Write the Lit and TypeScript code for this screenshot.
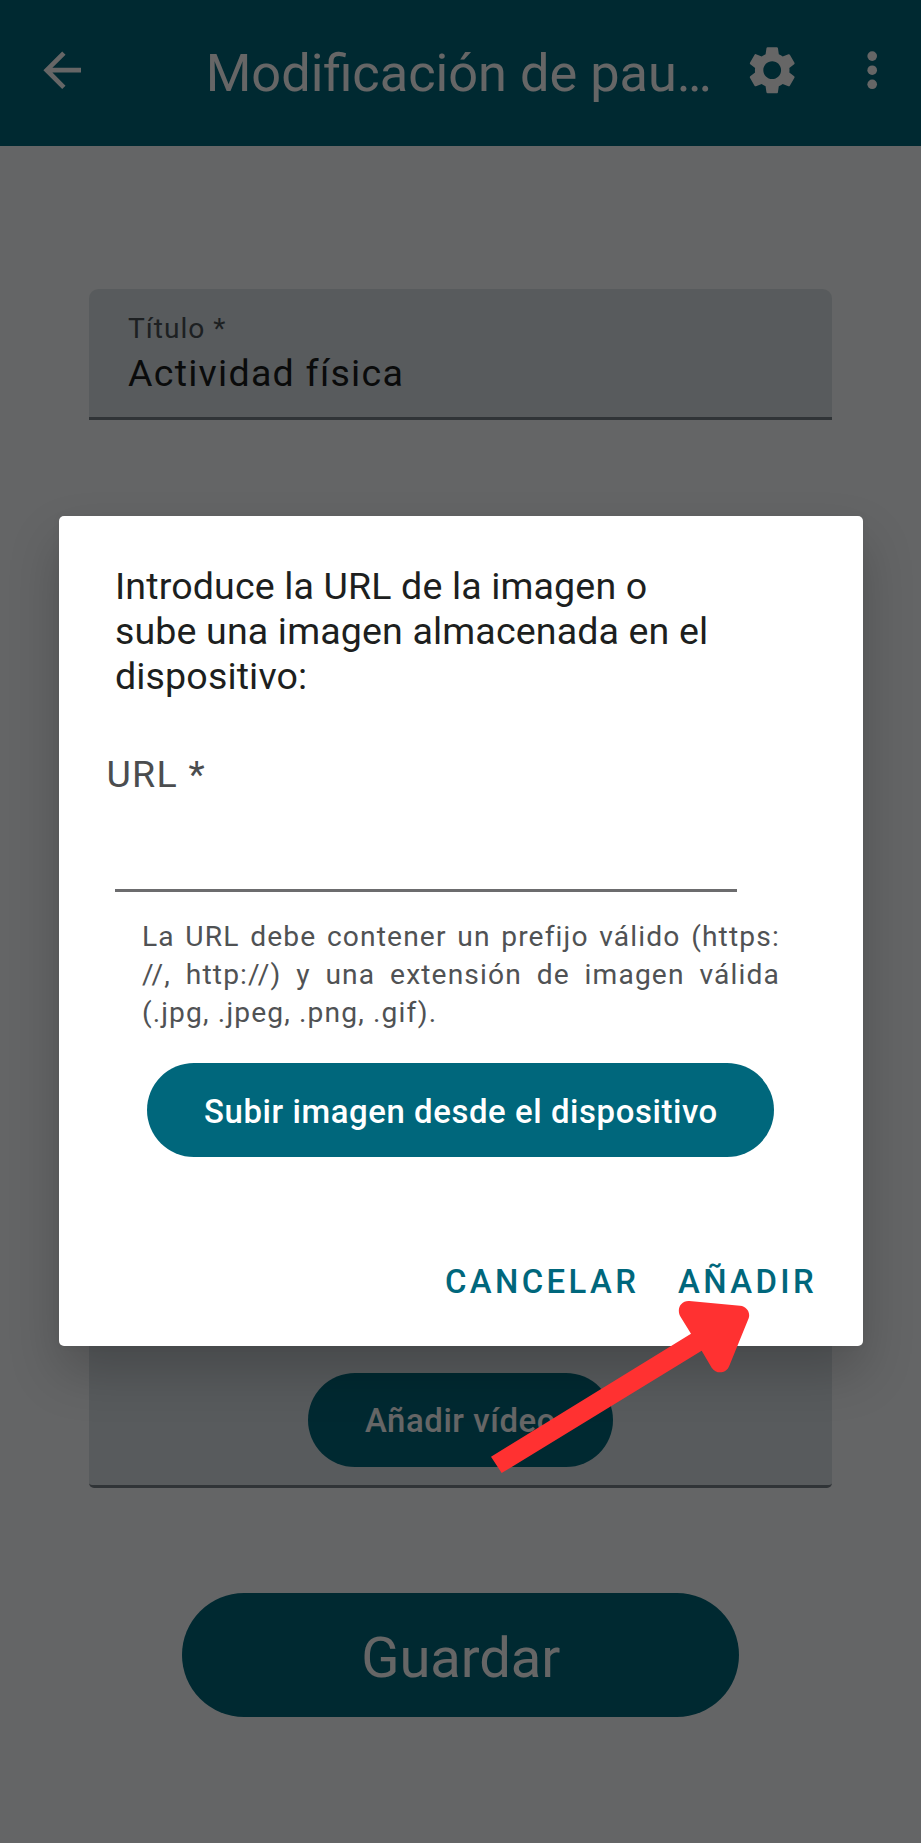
import { LitElement, html, css } from "lit";
import { customElement } from "lit/decorators.js";

@customElement("app-root")
class AppRoot extends LitElement {
  static styles = css`
    :host { display: block; position: relative; width: 921px; height: 1843px; overflow: hidden;
      font-family: Roboto, "Liberation Sans", sans-serif; }
    * { box-sizing: border-box; }
    .page { height: 1843px; background: #fbfcfe; display: flex; flex-direction: column; align-items: center; }
    .bar { width: 100%; height: 145.6px; flex: none; background: #00677c; color: #fff; display: flex;
      align-items: center; padding: 0 20.8px 4.6px 34.3px; }
    .icon { width: 56.4px; height: 56.4px; flex: none; fill: currentColor; }
    .title { font-size: 52.3px; line-height: 62px; padding-top: 4.6px; margin: 0 0 0 115px; width: 538.7px;
      font-weight: 400; white-space: nowrap; }
    .more { margin-left: 43px; }
    .field { width: 743px; height: 131.5px; flex: none; margin-top: 143px; background: #dce4e8;
      border-radius: 9.4px 9.4px 0 0; border-bottom: 3px solid #78828a; padding: 23.6px 39px 0; }
    .label { font-size: 28.2px; line-height: 34px; letter-spacing: 0.98px; color: #4a5256; }
    .value { font-size: 37.6px; line-height: 44px; letter-spacing: 1.25px; margin-top: 4.6px; color: #191c1d; }
    .panel { width: 743px; height: 588px; flex: none; margin-top: 480px; background: #dce4e8;
      border-radius: 9.4px 9.4px 5px 5px; border-bottom: 3px solid #78828a; padding-bottom: 17.9px;
      display: flex; flex-direction: column; justify-content: flex-end; align-items: center; }
    .btn { border: 0; margin: 0; padding: 0; font-family: inherit; background: #00677c; color: #fff;
      font-size: 32.9px; font-weight: 500; letter-spacing: 0.59px; height: 94.5px; border-radius: 48px;
      display: block; white-space: nowrap; }
    .video { width: 305.4px; padding-top: 2px; }
    .save { width: 556.5px; height: 123.6px; flex: none; border-radius: 62px; margin-top: 105px;
      font-size: 56.2px; font-weight: 400; letter-spacing: -0.1px; padding: 6px 0 0 0.6px; }
    .scrim { position: absolute; inset: 0; background: rgba(0, 0, 0, 0.6); display: flex;
      flex-direction: column; align-items: center; padding-top: 516.3px; }
    .dialog { width: 804px; height: 829.7px; background: #fff; border-radius: 5px;
      box-shadow: 0 26px 52px rgba(0, 0, 0, 0.2), 0 0 8px rgba(0, 0, 0, 0.04);
      display: flex; flex-direction: column; align-items: flex-start; padding-top: 48.2px; }
    .prompt { margin: 0 0 0 56.5px; font-size: 37.6px; line-height: 44.7px; letter-spacing: 0.13px;
      color: #1d1f20; font-weight: 400; }
    .line { display: block; white-space: nowrap; }
    .url { margin: 53.5px 0 0 48px; font-size: 37.6px; line-height: 44px; letter-spacing: 1.22px; color: #4b4d4f; }
    .input { width: 622px; height: 3px; background: #6c6c6e; margin: 93.2px 0 0 56.5px; }
    .help { width: 638px; margin: 26.1px 0 0 83.4px; font-size: 28.2px; line-height: 37.8px;
      letter-spacing: 1.13px; color: #505254; }
    .full { text-align: justify; text-align-last: justify; }
    .upload { width: 627.5px; margin: 31.1px 0 0 88.2px; padding: 2.5px 0 0 1px; }
    .actions { align-self: stretch; display: flex; justify-content: flex-end; gap: 38.8px;
      padding-right: 45.4px; margin-top: 104.8px; font-size: 32.9px; line-height: 40px; font-weight: 500;
      letter-spacing: 3.38px; color: #00677c; }
    .pointer { position: absolute; left: 420px; top: 1230px; width: 460px; height: 280px; fill: #ff3131; }
  `;

  render() {
    return html`
      <div class="page">
        <header class="bar">
          <svg class="icon" viewBox="0 0 24 24"><path d="M20 11H7.83l5.59-5.59L12 4l-8 8 8 8 1.41-1.41L7.83 13H20v-2z"/></svg>
          <h1 class="title">Modificación de pau…</h1>
          <svg class="icon gear" viewBox="0.25 0.25 23.5 23.5"><path d="M19.14 12.94c.04-.3.06-.61.06-.94 0-.32-.02-.64-.07-.94l2.03-1.58c.18-.14.23-.41.12-.61l-1.92-3.32c-.12-.22-.37-.29-.59-.22l-2.39.96c-.5-.38-1.03-.7-1.62-.94L14.4 2.81c-.04-.24-.24-.41-.48-.41h-3.84c-.24 0-.43.17-.47.41L9.25 5.35C8.66 5.59 8.12 5.92 7.63 6.29L5.24 5.33c-.22-.08-.47 0-.59.22L2.74 8.87c-.12.21-.08.47.12.61l2.03 1.58C4.84 11.36 4.8 11.69 4.8 12s.02.64.07.94l-2.03 1.58c-.18.14-.23.41-.12.61l1.92 3.32c.12.22.37.29.59.22l2.39-.96c.5.38 1.03.7 1.62.94l.36 2.54c.05.24.24.41.48.41h3.84c.24 0 .44-.17.47-.41l.36-2.54c.59-.24 1.13-.56 1.62-.94l2.39.96c.22.08.47 0 .59-.22l1.92-3.32c.12-.22.07-.47-.12-.61L19.14 12.94zM12 15.7c-2.04 0-3.7-1.66-3.7-3.7s1.66-3.7 3.7-3.7 3.7 1.66 3.7 3.7-1.66 3.7-3.7 3.7z"/></svg>
          <svg class="icon more" viewBox="0 0 24 24"><circle cx="12" cy="6" r="2.05"/><circle cx="12" cy="12" r="2.05"/><circle cx="12" cy="18" r="2.05"/></svg>
        </header>
        <div class="field">
          <div class="label">Título *</div>
          <div class="value">Actividad física</div>
        </div>
        <div class="panel"><button class="btn video">Añadir vídeo</button></div>
        <button class="btn save">Guardar</button>
      </div>
      <div class="scrim">
        <section class="dialog">
          <h2 class="prompt">
            <span class="line">Introduce la URL de la imagen o</span>
            <span class="line">sube una imagen almacenada en el</span>
            <span class="line">dispositivo:</span>
          </h2>
          <div class="url">URL *</div>
          <div class="input"></div>
          <div class="help">
            <span class="line full">La URL debe contener un prefijo válido (https:</span>
            <span class="line full">//, http://) y una extensión de imagen válida</span>
            <span class="line">(.jpg, .jpeg, .png, .gif).</span>
          </div>
          <button class="btn upload">Subir imagen desde el dispositivo</button>
          <div class="actions"><span>CANCELAR</span><span>AÑADIR</span></div>
        </section>
      </div>
      <svg class="pointer" viewBox="0 0 1380 840"><path d="M213 680 L813 311 L782 261 C768 238 782 211 808 213 L960 227 C980 229 992 247 986 265 L928 407 C919 431 889 434 875 413 L845 362 L245 729 Z"/></svg>
    `;
  }
}
